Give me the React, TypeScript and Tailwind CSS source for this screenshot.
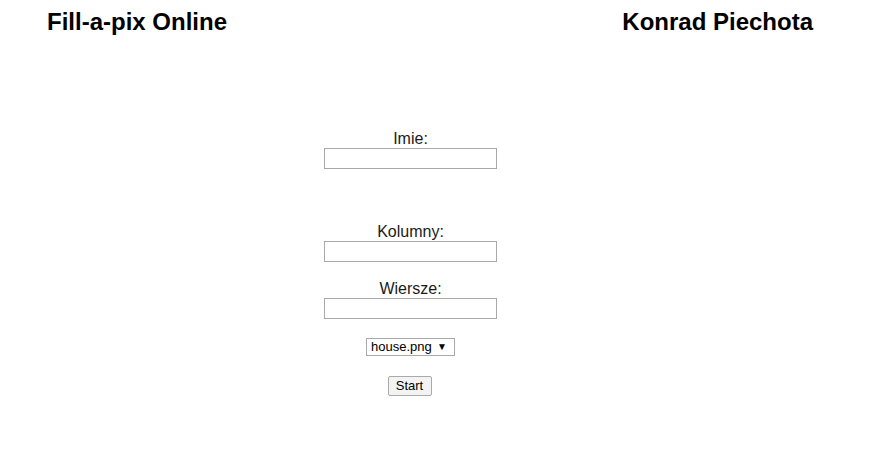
import React from "react";

export default function App() {
  return (
    <div className="w-full h-[451px] bg-white text-black font-['Liberation_Sans',Arial,sans-serif]">
      <header className="flex justify-between pl-[47px] pr-[77px] pt-[8px]">
        <h2 className="text-[24px] font-bold leading-[28px]">Fill-a-pix Online</h2>
        <h2 className="text-[24px] font-bold leading-[28px]">Konrad Piechota</h2>
      </header>
      <form className="flex flex-col items-center pt-[94px] pr-[69px]" onSubmit={(e) => e.preventDefault()}>
        <label className="text-[16px] leading-[18px] text-[#1a1a1a]">Imie:</label>
        <input type="text" className="w-[173px] h-[21px] border border-[#a9a9a9] bg-white px-[2px] text-[13px] outline-none" />
        <label className="mt-[54px] text-[16px] leading-[18px] text-[#1a1a1a]">Kolumny:</label>
        <input type="text" className="w-[173px] h-[21px] border border-[#a9a9a9] bg-white px-[2px] text-[13px] outline-none" />
        <label className="mt-[18px] text-[16px] leading-[18px] text-[#1a1a1a]">Wiersze:</label>
        <input type="text" className="w-[173px] h-[21px] border border-[#a9a9a9] bg-white px-[2px] text-[13px] outline-none" />
        <div className="relative mt-[19px]">
          <select className="block appearance-none w-[89px] h-[18px] border border-[#a9a9a9] bg-white pl-[4px] pr-[16px] text-[13px] leading-[16px] outline-none rounded-none">
            <option>house.png</option>
          </select>
          <span className="pointer-events-none absolute right-[8px] top-[3px] text-[10px] leading-[11px]">▼</span>
        </div>
        <button type="submit" className="mt-[20px] mr-[2px] w-[44px] h-[20px] border border-[#a9a9a9] bg-[#f3f3f3] text-[13px] leading-[16px] rounded-[2px]">Start</button>
      </form>
    </div>
  );
}
